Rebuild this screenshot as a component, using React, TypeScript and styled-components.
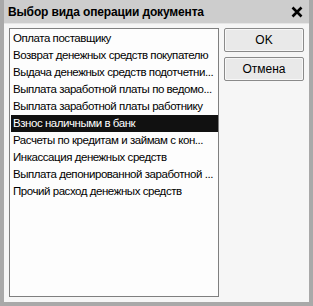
import { createGlobalStyle, styled } from "styled-components";

const operations = [
  "Оплата поставщику",
  "Возврат денежных средств покупателю",
  "Выдача денежных средств подотчетни...",
  "Выплата заработной платы по ведомо...",
  "Выплата заработной платы работнику",
  "Взнос наличными в банк",
  "Расчеты по кредитам и займам с кон...",
  "Инкассация денежных средств",
  "Выплата депонированной заработной ...",
  "Прочий расход денежных средств",
];

function App() {
  return (
    <>
      <GlobalStyle />
      <Window>
        <TitleBar>
          <Title>Выбор вида операции документа</Title>
          <CloseIcon viewBox="0 0 12 12">
            <path d="M1.5 1.5 L10.5 10.5 M10.5 1.5 L1.5 10.5" />
          </CloseIcon>
        </TitleBar>
        <Body>
          <List>
            {operations.map((name, i) => (
              <Item key={name} $selected={i === 5}>
                {name}
              </Item>
            ))}
          </List>
          <Side>
            <Button>OK</Button>
            <Button>Отмена</Button>
          </Side>
        </Body>
      </Window>
    </>
  );
}

const GlobalStyle = createGlobalStyle`
  body {
    margin: 0;
    background: #ffffff;
  }
`;

const Window = styled.div`
  width: 313px;
  height: 306px;
  box-sizing: border-box;
  display: flex;
  flex-direction: column;
  background: #cbcbcb;
  border: 4px solid #a9a9a9;
  border-top: none;
  font-family: "Liberation Sans", Arial, sans-serif;
`;

const TitleBar = styled.div`
  height: 23px;
  flex-shrink: 0;
  display: flex;
  justify-content: space-between;
  align-items: center;
  padding: 0 6px 0 4px;
  background: #cdcdcd;
`;

const Title = styled.div`
  font-size: 12px;
  font-weight: bold;
  letter-spacing: -0.15px;
  color: #000;
`;

const CloseIcon = styled.svg`
  width: 12px;
  height: 12px;
  stroke: #000;
  stroke-width: 2.6;
  fill: none;
`;

const Body = styled.div`
  flex: 1;
  display: flex;
  gap: 5px;
  padding: 4px 5px 5px 5px;
  background: #f6f6f6;
  border-top: 1px solid #e6e6e6;
`;

const List = styled.div`
  width: 210px;
  box-sizing: border-box;
  border: 1px solid #7f7f7f;
  background: #fdfdfd;
  padding: 1px 0 0 1px;
`;

const Item = styled.div<{ $selected?: boolean }>`
  height: 17px;
  line-height: 17px;
  padding-left: 2px;
  font-size: 11.5px;
  letter-spacing: -0.45px;
  white-space: nowrap;
  overflow: hidden;
  color: ${(p) => (p.$selected ? "#fff" : "#000")};
  background: ${(p) => (p.$selected ? "#111" : "transparent")};
`;

const Side = styled.div`
  display: flex;
  flex-direction: column;
  gap: 5px;
`;

const Button = styled.button`
  width: 80px;
  height: 24px;
  box-sizing: border-box;
  border: 1px solid #8a8a8a;
  border-radius: 2px;
  background: #e9e9e9;
  box-shadow: inset 0 0 0 1px #f7f7f7;
  font-family: "Liberation Sans", Arial, sans-serif;
  font-size: 12px;
  color: #000;
  padding: 0;
`;

export default App;
